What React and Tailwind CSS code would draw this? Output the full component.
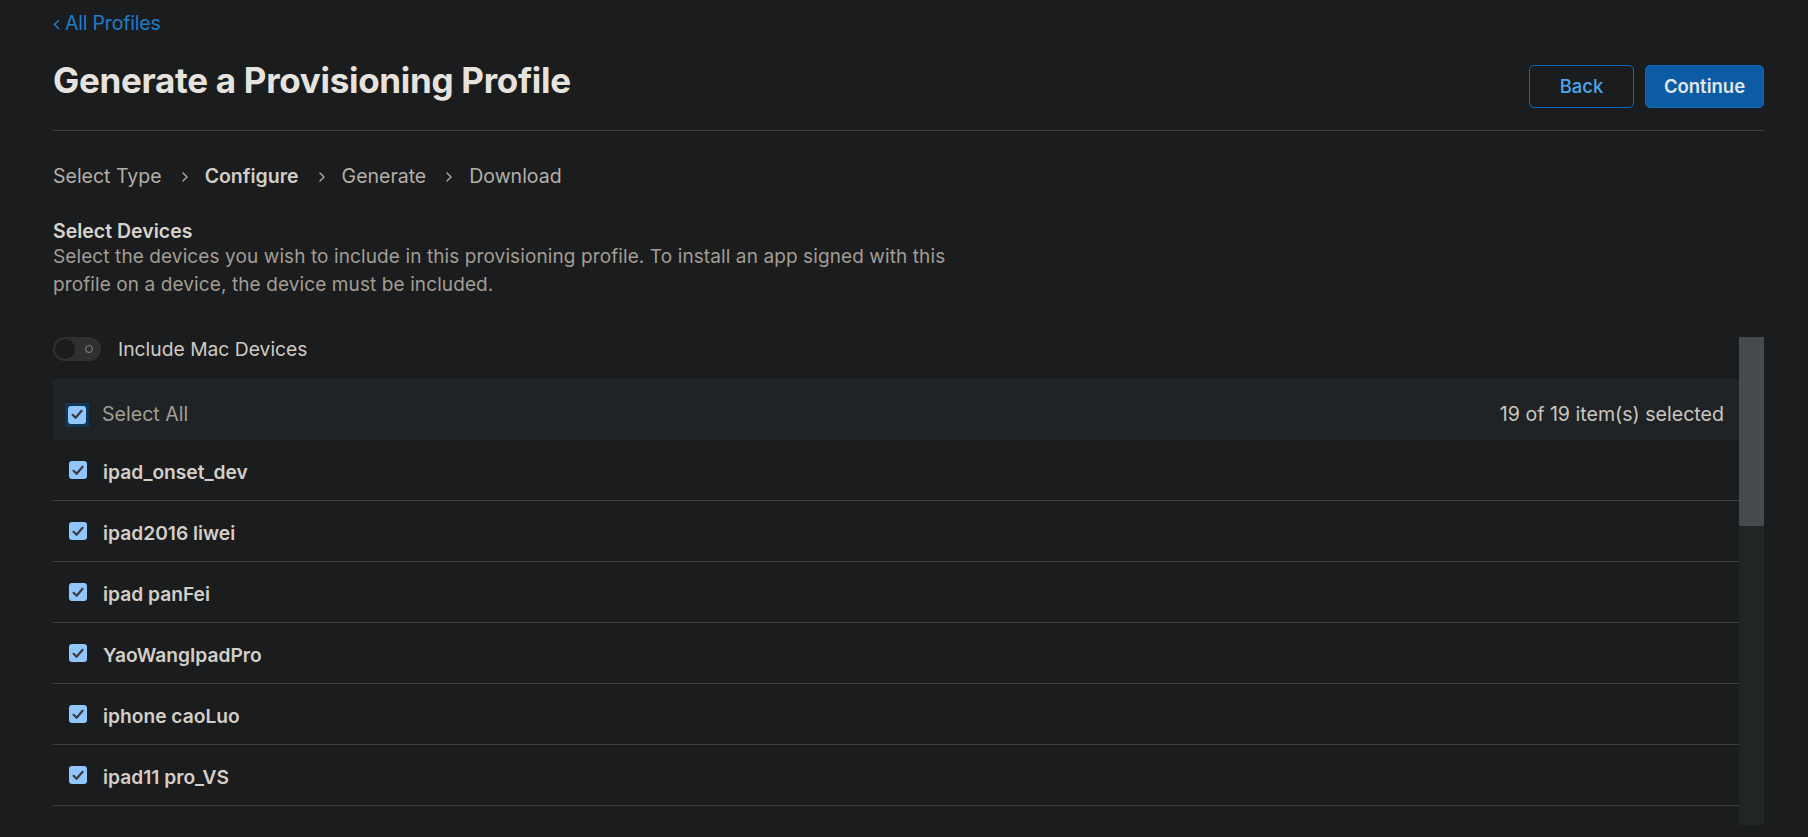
const DEVICES = [
  'ipad_onset_dev',
  'ipad2016 liwei',
  'ipad panFei',
  'YaoWangIpadPro',
  'iphone caoLuo',
  'ipad11 pro_VS',
];

const STEPS = [
  { label: 'Select Type' },
  { label: 'Configure', active: true },
  { label: 'Generate' },
  { label: 'Download' },
];

function Chevron() {
  return (
    <svg width="8" height="12" viewBox="0 0 8 12" className="ml-[19px] mr-[16px] text-[#b0aca4]">
      <path d="M2 2l4 4-4 4" fill="none" stroke="currentColor" strokeWidth="1.4" strokeLinecap="round" strokeLinejoin="round" />
    </svg>
  );
}

function Check({ focused }) {
  return (
    <span className={focused ? 'flex h-[24px] w-[24px] items-center justify-center bg-[#0f3658]' : 'flex h-[18px] w-[18px]'}>
      <span className="flex h-[18px] w-[18px] items-center justify-center rounded-[3px] bg-[#90c6fb]">
        <svg width="12" height="11" viewBox="0 0 12 11">
          <path d="M1.6 5.8l3 3L10.6 1.8" fill="none" stroke="#3b3b3d" strokeWidth="2.2" strokeLinecap="round" strokeLinejoin="round" />
        </svg>
      </span>
    </span>
  );
}

export default function App() {
  return (
    <div className="h-[837px] overflow-hidden bg-[#1b1c1e] pl-[53px] pr-[44px] font-['Inter',sans-serif] text-[#d8d4cc]">
      <a className="mt-[12px] flex h-[24px] items-center gap-[5px] text-[19.5px] tracking-[-0.2px] text-[#1f7ccb]">
        <svg width="7" height="11" viewBox="0 0 7 11">
          <path d="M5.5 1.5l-4 4 4 4" fill="none" stroke="currentColor" strokeWidth="1.6" strokeLinecap="round" strokeLinejoin="round" />
        </svg>
        All Profiles
      </a>

      <div className="mt-[23px] flex items-start justify-between border-b border-[#3c3d3f] pb-[22px]">
        <h1 className="text-[35px] font-bold leading-[42px] tracking-[-0.3px] text-[#e6e3de]">Generate a Provisioning Profile</h1>
        <div className="mt-[6px] flex gap-[11px]">
          <button className="h-[43px] w-[105px] rounded-[5px] border border-[#0d6bbd] text-[18.5px] font-medium text-[#4ba6ee]">Back</button>
          <button className="h-[43px] w-[119px] rounded-[5px] border border-[#1169b8] bg-[#0b5ca5] text-[18.5px] font-semibold text-[#e4e6e8]">Continue</button>
        </div>
      </div>

      <nav className="mt-[34px] flex h-[24px] items-center text-[19.5px]">
        {STEPS.map((s, i) => (
          <div key={s.label} className="flex items-center">
            {i > 0 && <Chevron />}
            <span className={s.active ? 'font-semibold text-[#d2cec7]' : 'text-[#b3afa7]'}>{s.label}</span>
          </div>
        ))}
      </nav>

      <h2 className="mt-[30px] text-[19.5px] font-semibold leading-[24px] text-[#d8d4cc]">Select Devices</h2>
      <p className="max-w-[900px] text-[19px] leading-[28px] tracking-[0.1px] text-[#a29d94]">
        Select the devices you wish to include in this provisioning profile. To install an app signed with this profile on a device, the device must be included.
      </p>

      <div className="mt-[38px] flex h-[488px]">
        <div className="flex-1 overflow-hidden">
          <div className="flex h-[24px] items-center gap-[17px]">
            <span className="flex h-[24px] w-[48px] items-center justify-between rounded-full bg-[#2e3032] pl-[2px] pr-[8px]">
              <span className="h-[20px] w-[20px] rounded-full bg-[#1b1c1e]" />
              <span className="h-[8px] w-[8px] rounded-full border border-[#8a8782]" />
            </span>
            <span className="text-[19.3px] text-[#cfcbc4]">Include Mac Devices</span>
          </div>

          <div className="mt-[18px] flex h-[61px] items-center justify-between bg-[#202325] pl-[12px] pr-[15px] pt-[11px] text-[19.6px]">
            <div className="flex items-center gap-[13px]">
              <Check focused />
              <span className="text-[#a39d92]">Select All</span>
            </div>
            <span className="text-[#c9c6c0]">19 of 19 item(s) selected</span>
          </div>

          {DEVICES.map((d) => (
            <div key={d} className="flex h-[61px] items-center gap-[16px] border-b border-[#3b3c3e] pl-[16px]">
              <Check />
              <span className="mt-[4px] text-[19.2px] font-semibold text-[#d3cfc8]">{d}</span>
            </div>
          ))}
        </div>

        <div className="w-[25px] bg-[#212526]">
          <div className="h-[189px] bg-[#464a4d]" />
        </div>
      </div>
    </div>
  );
}
